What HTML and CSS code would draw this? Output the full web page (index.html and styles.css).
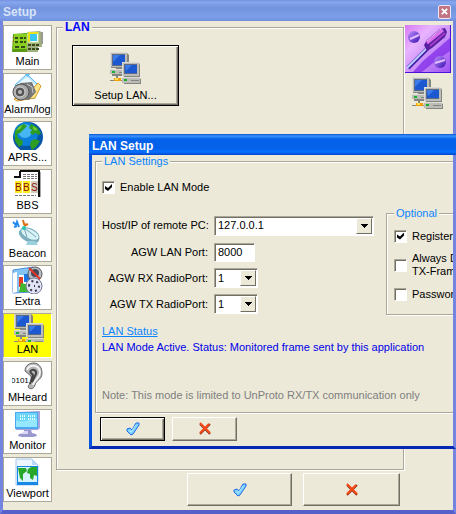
FILE: index.html
```html
<!DOCTYPE html>
<html lang="en">
<head>
<meta charset="utf-8">
<title>Setup</title>
<link rel="stylesheet" href="styles.css">
</head>
<body>
<svg class="defs" aria-hidden="true">
  <defs>
    <symbol id="net" viewBox="0 0 32 32">
      <path fill="#85857f" d="M3 1h14l2 2v13h-4v2h5v6H2V18h4v-2H1V3z"/>
      <path fill="#bdbdb8" d="M0 0h17v15H0zM0 17h18v5H0z"/>
      <path fill="#dcdcd8" d="M0 0h17v1H0zM0 0h1v15H0zM0 17h18v1H0z"/>
      <path fill="#5c6a88" d="M2 2h13v12H2z"/>
      <path fill="#1c58d0" d="M3 3h12v10H3z"/>
      <path fill="#3c7ce8" d="M3 3h7l-7 7z"/>
      <path fill="#18b030" d="M2 19h3v2H2z"/>
      <path fill="#85857f" d="M9 20h8v1H9zM6 23h2v3H6zM0 28h14v1H0z"/>
      <path fill="#f0a000" d="M4 26h7v3H4z"/><path fill="#ffdc50" d="M5 26h3v2H5z"/>
      <path fill="#85857f" d="M14 11h15l1 2v12h-3l4 2v5H14z"/>
      <path fill="#bdbdb8" d="M12 10h17v14H12zM12 26h18v5H12z"/>
      <path fill="#dcdcd8" d="M12 10h17v1H12zM12 10h1v14h-1zM14 25h14l2 1H12z"/>
      <path fill="#5c6a88" d="M14 12h13v10H14z"/>
      <path fill="#1c58d0" d="M15 13h12v8H15z"/>
      <path fill="#3c7ce8" d="M15 13h7l-6 6z"/>
      <path fill="#18b030" d="M14 27h3v2h-3z"/><path fill="#85857f" d="M21 28h8v1h-8z"/>
    </symbol>
    <symbol id="ok" viewBox="0 0 14 14">
      <path d="M1 7l3-1 2 2 4-7h3v2L7 12 5 13 1 9z" fill="#7fd4ff" stroke="#2068e8"/>
      <path d="M4 9l1 1 5-7" fill="none" stroke="#b4edff"/>
    </symbol>
    <symbol id="no" viewBox="0 0 14 14">
      <path d="M2 2l10 10M12 2L2 12" fill="none" stroke="#8c3a22" stroke-width="2"/>
      <path d="M2 1l10 10M11 2L2 11" fill="none" stroke="#f84818" stroke-width="2"/>
    </symbol>
    <symbol id="down" viewBox="0 0 7 4"><path d="M0 0h7v1H6v1H5v1H4v1H3V3H2V2H1V1H0z"/></symbol>
  </defs>
</svg>
<div class="window">
  <header class="titlebar">
    <h1>Setup</h1>
    <button class="close" type="button" aria-label="Close"><svg viewBox="0 0 10 10"><path d="M2 2l6 6M8 2L2 8" stroke="#fff" stroke-width="2"/></svg></button>
  </header>
  <div class="content">
    <nav class="tabs">
      <button type="button" class="tab"><svg viewBox="0 0 32 28">
        <path fill="#5a9a10" d="M1 8l14-1v19H0z"/><path fill="#8ad020" d="M2 8h14v15H1z"/><path fill="#a0b080" d="M15 6l13-1 2 2v14h-4v5H15z"/><path fill="#b9d98a" d="M15 6h12v11H15z"/>
        <path fill="#9a9a92" d="M29 6h2v12h-2z"/><path fill="#fff" d="M17 7h9v9h-9z"/><path fill="#e8e020" d="M16 6h10v2H18v8h-2z"/><path fill="#38c8f0" d="M18 8h7v7h-7z"/>
        <path fill="#354a18" d="M3 11h3v2H3zM8 11h3v2H8zM12 11h2v2h-2zM3 15h3v2H3zM8 15h3v2H8zM12 15h2v2h-2zM3 20h4v2H3zM9 20h4v2H9zM16 18h3v2h-3zM20 18h3v2h-3zM24 18h3v2h-3zM16 22h3v2h-3zM20 22h3v2h-3zM24 22h3v2h-3z"/><path fill="#e03020" d="M1 11h1v1H1zM1 15h1v1H1z"/>
      </svg><span>Main</span></button>
      <button type="button" class="tab"><svg viewBox="0 0 32 28">
        <path fill="#bde6fb" stroke="#58b6ea" d="M3 11L15 0l12 12-5 13-15-6z"/><path fill="#eaf9ff" d="M6 10l9-7 9 8-9 7z"/><path fill="#52bff5" d="M13 0h5l-2 3z"/>
        <path fill="#ffe58a" stroke="#d59a20" d="M2 25l14-5 10-11 3 3-6 12-18 3z"/><path fill="#777" d="M8 9l12-1 4 10-7 8-8-1z"/><circle cx="9" cy="18" r="8" fill="#a8a8a8" stroke="#555"/><circle cx="8" cy="18" r="5" fill="#555" stroke="#ddd"/><circle cx="8" cy="18" r="2" fill="#bbb"/><path fill="none" stroke="#ccc" d="M15 10l5 3 1 6"/>
      </svg><span>Alarm/log</span></button>
      <button type="button" class="tab"><svg viewBox="0 0 32 28">
        <circle cx="16" cy="15" r="15" fill="#0656a8"/><circle cx="14" cy="12" r="12" fill="#0c7fd8"/><circle cx="13" cy="9" r="7" fill="#45b5f4"/>
        <path fill="#2c9c22" d="M3 9l4-5 5-2 3 2-4 4-3 3-3 1 1 4 5 3-1 4-3 2-4-6zM19 2l6 3 4 6-2 2-4-2-2 2-3-2 2-3-3-2zM19 19l4-2 5 2-4 6-4 3-2-5z"/><path fill="#78d040" d="M7 5l4-2-3 4-4 2zM21 4l4 3-1 2-3-2z"/>
      </svg><span>APRS...</span></button>
      <button type="button" class="tab"><svg viewBox="0 0 32 28">
        <path d="M7 1h20v26H3V7h4z" fill="#fff"/><path d="M8 1v6H2M8 1h19v26" fill="none" stroke="#111" stroke-width="2"/><path fill="#aaa" d="M28 2h1v25h-1z"/><path stroke="#777" stroke-dasharray="3 1" d="M11 4.500h14M11 6.500h14M11 8.500h14M3 25.500h21"/>
        <path fill="#ffec20" d="M3 11h7v12H3zM11 11h7v12h-7z"/><path fill="#d4cdbb" d="M19 11h7v12h-7z"/><text x="3" y="21" class="bbs">B</text><text x="11" y="21" class="bbs">B</text><text x="19" y="21" class="bbs">S</text>
      </svg><span>BBS</span></button>
      <button type="button" class="tab"><svg viewBox="0 0 32 28">
        <path fill="none" stroke="#2088f0" stroke-width="2" d="M1 4l3 3 1-3 2 5M2 9l3-1"/><path fill="none" stroke="#e07018" stroke-width="2" d="M11 2l1 4 3 1M16 6l-4 2"/>
        <ellipse cx="17" cy="18" rx="11" ry="6" transform="rotate(27 17 18)" fill="#7fb0c0"/><ellipse cx="18" cy="16" rx="10" ry="5" transform="rotate(27 18 16)" fill="#d8f4f8" stroke="#79a9b8"/><path stroke="#78a4b0" fill="none" d="M12 10l7 5 5 4M12 10l3 9"/><circle cx="12" cy="10" r="2" fill="#20c8b8"/><path fill="#9ad0dc" d="M16 23h7l3 4H14z"/>
      </svg><span>Beacon</span></button>
      <button type="button" class="tab"><svg viewBox="0 0 32 28">
        <path fill="#84c4f4" stroke="#4b8fd8" d="M1 4l20-3v25L1 27z"/><path fill="#fff" d="M1 7l4-1v20l-4 1zM7 9h11v15H7z"/><path fill="#e83c20" d="M7 11h4v10H7z"/><path fill="#40b830" d="M9 17l9 2v7H7z"/><path fill="#1c78e0" d="M12 8h6v8h-6z"/>
        <circle cx="23" cy="8" r="7" fill="#b9bdc8" stroke="#555"/><circle cx="23" cy="7" r="4" fill="#454a58"/><path stroke="#e83228" stroke-width="2" d="M17 2l11 11"/><circle cx="22" cy="20" r="8" fill="#e1e4f5" stroke="#777b96"/><path stroke="#34384c" stroke-width="2" fill="none" stroke-dasharray="2 3" d="M17 20a5 5 0 0110 0 5 5 0 01-10 0M22 20h1"/>
      </svg><span>Extra</span></button>
      <button type="button" class="tab tab--active"><svg viewBox="0 0 32 28"><use href="#net" x="2" y="-1" width="32" height="32"/></svg><span>LAN</span></button>
      <button type="button" class="tab"><svg viewBox="0 0 32 28">
        <path fill="#b5b5b5" stroke="#666" d="M13 9c0-6 5-8 9-8s8 4 8 10c0 7-6 7-7 12-1 4-5 5-7 2 2-4 4-7 3-11z"/><path fill="none" stroke="#f1f1f1" stroke-width="2" d="M15 8c2-6 12-6 13 2 0 6-5 7-7 13"/><path fill="none" stroke="#444" stroke-width="2" d="M18 10c2-4 7-2 6 2l-4 8M18 10l3 3-3 9"/><path fill="#fff" d="M0 14h16v8H0z"/><text x="-1" y="21" class="bits">0101</text>
      </svg><span>MHeard</span></button>
      <button type="button" class="tab"><svg viewBox="0 0 32 28">
        <path fill="#a6a6dc" d="M4 2l24-1v17l-2 2H4z"/><path fill="#4ba7ee" d="M3 2h23v17H3z"/><path fill="#6bd5fb" d="M4 3h21v14H4z"/><path fill="#96e8ff" d="M4 10c8 4 14-2 21-1v8H4z"/><path stroke="#e5ffff" stroke-width="2" stroke-dasharray="1 1" d="M8 6h6M16 6h7M8 9h6M16 9h7"/><path fill="#9998ce" d="M12 20h7l1 3 4 1 1 2-4 1H10l-4-1 1-2 5-1z"/><path fill="#dad9f5" d="M12 21h4v3H9z"/>
      </svg><span>Monitor</span></button>
      <button type="button" class="tab"><svg viewBox="0 0 32 28">
        <path fill="#edf5ff" stroke="#a6c7ed" d="M4 1h16l6 6v20H4z"/><path fill="#b9d9f8" d="M20 1v6h6z"/><path fill="#1688e8" d="M5 8h21v19H5z"/><path fill="#d4f3ff" d="M6 9h19v15H6z"/><path fill="#28a828" d="M6 10h8l1 3-4 3v7l-3-3-1-5zM16 11l3-2h6v9l-3-1-1 5-3-2v-4l-3-1z"/>
      </svg><span>Viewport</span></button>
    </nav>
    <main class="page">
      <fieldset class="group">
        <legend>LAN</legend>
        <button type="button" class="setup"><svg><use href="#net"/></svg><span>Setup LAN...</span></button>
      </fieldset>
      <div class="footer">
        <button type="button" class="btn" aria-label="OK"><svg class="mark"><use href="#ok"/></svg></button>
        <button type="button" class="btn" aria-label="Cancel"><svg class="mark"><use href="#no"/></svg></button>
      </div>
    </main>
    <aside class="side">
      <svg class="tools" viewBox="0 0 46 48">
        <defs>
          <linearGradient id="lilac" x2="1" y2="1"><stop stop-color="#d878f4"/><stop offset=".3" stop-color="#e8b4ff"/><stop offset="1" stop-color="#9a50f0"/></linearGradient>
          <linearGradient id="ball" x2="1" y2="1"><stop stop-color="#c090ff"/><stop offset="1" stop-color="#3810b0"/></linearGradient>
        </defs>
        <path fill="url(#lilac)" d="M0 0h46v48H0z"/><path fill="#8432e8" d="M18 36l27-23v13L28 38l-11 9h-9z" opacity=".8"/><path fill="#4a12dc" d="M45 0h1v48H0v-1h45z"/>
        <circle cx="9" cy="12" r="6" fill="url(#ball)"/><path stroke="#e4baff" stroke-width="2" d="M5 14l9-4"/><circle cx="35" cy="37" r="6" fill="url(#ball)"/><path stroke="#e4baff" stroke-width="2" d="M30 38l10-3"/>
        <path stroke="#4422a8" stroke-width="4" d="M3 43l20-20"/><path stroke="#b8ccff" stroke-width="2" d="M2 43l20-20"/><path fill="#5820a0" d="M19 20l3-5L35 4l5-1 2 4-2 5-13 11-5 3z"/><path stroke="#dc70ec" stroke-width="3" d="M22 18L38 5"/><path stroke="#a23cc8" stroke-width="2" d="M25 21L40 8"/><path stroke="#f4baff" d="M22 16L36 4"/>
      </svg>
      <svg class="pcs"><use href="#net"/></svg>
    </aside>
  </div>
  <section class="dialog" role="dialog" aria-labelledby="dlg">
    <h2 id="dlg" class="dialog-title">LAN Setup</h2>
    <form class="dialog-body">
      <fieldset class="settings">
        <legend>LAN Settings</legend>
        <label class="check"><input type="checkbox" checked><span>Enable LAN Mode</span></label>
        <div class="columns">
          <div class="fields">
            <label for="host">Host/IP of remote PC:</label>
            <div class="combo combo--wide"><select id="host"><option>127.0.0.1</option></select><i><svg><use href="#down"/></svg></i></div>
            <label for="port">AGW LAN Port:</label>
            <input id="port" class="text" type="text" value="8000">
            <label for="rx">AGW RX RadioPort:</label>
            <div class="combo"><select id="rx"><option>1</option></select><i><svg><use href="#down"/></svg></i></div>
            <label for="tx">AGW TX RadioPort:</label>
            <div class="combo"><select id="tx"><option>1</option></select><i><svg><use href="#down"/></svg></i></div>
          </div>
          <fieldset class="optional">
            <legend>Optional</legend>
            <label class="check"><input type="checkbox" checked><span>Register</span></label>
            <label class="check"><input type="checkbox"><span>Always D<br>TX-Fram</span></label>
            <label class="check"><input type="checkbox"><span>Passwor</span></label>
          </fieldset>
        </div>
        <div class="status">
          <a href="#status">LAN Status</a>
          <p id="status">LAN Mode Active. Status: Monitored frame sent by this application</p>
        </div>
        <p class="note">Note: This mode is limited to UnProto RX/TX communication only</p>
      </fieldset>
      <div class="actions">
        <button type="button" class="btn btn--default" aria-label="OK"><svg class="mark"><use href="#ok"/></svg></button>
        <button type="button" class="btn" aria-label="Cancel"><svg class="mark"><use href="#no"/></svg></button>
      </div>
    </form>
  </section>
</div>
</body>
</html>
```
FILE: styles.css
```css
* { box-sizing: border-box; }
body {
  margin: 0;
  font: 11px/13px "Liberation Sans", Arial, sans-serif;
  color: #000;
  overflow-x: hidden;
}
button, input, select { font: inherit; color: inherit; margin: 0; padding: 0; border-radius: 0; }
h1, h2, p { margin: 0; }
fieldset { margin: 0; padding: 0; min-width: 0; }
svg { display: block; }
.defs { position: absolute; width: 0; height: 0; }

.window {
  position: relative;
  display: flex;
  flex-direction: column;
  min-height: 100vh;
  background: #ece9d8;
  border: solid #7385e0;
  border-width: 0 3px 4px;
  border-bottom-color: #5560c8;
}
.titlebar {
  display: flex;
  align-items: center;
  justify-content: space-between;
  height: 21px;
  margin: 0 -3px;
  padding: 2px 5px 0 3px;
  background: linear-gradient(#7390e0, #86a6ee 2px, #7393df 8px, #7d9fe9 17px, #728fdc);
}
.titlebar h1 { font-size: 12px; line-height: 18px; color: #d8e4f8; }
.close {
  display: grid;
  place-items: center;
  width: 13px;
  height: 14px;
  background: #c07484;
  border: 1px solid #efe5f5;
  border-radius: 2px;
}
.close svg { width: 9px; height: 9px; }

.content { flex: 1; display: flex; gap: 4px; }
.tabs { display: flex; flex-direction: column; gap: 3px; width: 49px; padding-top: 4px; }
.tab {
  display: flex;
  flex-direction: column;
  align-items: center;
  row-gap: 1px;
  height: 45px;
  background: #fff;
  border: 1px solid #aca899;
  white-space: nowrap;
}
.tab svg { width: 32px; height: 28px; flex: none; }
.tab--active { background: #ff0; border-color: #aca899 #fff #fff #aca899; }
.bbs { font: 10px "Liberation Sans", sans-serif; fill: #8b1010; }
.bits { font: 8px "Liberation Sans", sans-serif; fill: #000; }

.page { flex: 1; display: flex; flex-direction: column; gap: 3px; }
.group, .settings, .optional {
  border: 1px solid #aca899;
  box-shadow: 1px 1px 0 #fff, inset 1px 1px 0 #fff;
}
legend { background: #ece9d8; padding: 0 2px; color: #0a84ff; }
.group { flex: 1; padding: 11px 15px; }
.group > legend { margin-left: -9px; font-size: 12px; font-weight: bold; color: #00f; }
.btn, .setup {
  display: grid;
  place-items: center;
  background: #ece9d8;
  border: 1px solid;
  border-color: #fff #716f64 #716f64 #fff;
  box-shadow: inset -1px -1px 0 #aca899;
}
.setup, .btn--default { border-color: #000; box-shadow: inset 1px 1px 0 #fff, inset -1px -1px 0 #716f64, inset -2px -2px 0 #aca899; }
.setup { width: 107px; height: 61px; align-content: center; row-gap: 5px; padding-top: 2px; }
.setup svg, .pcs { width: 32px; height: 32px; }
.mark { width: 14px; height: 14px; }
.footer { display: grid; grid-template-columns: 105px 97px; gap: 11px; justify-content: end; padding: 0 4px 4px 0; }
.footer .btn { height: 33px; }

.side { display: flex; flex-direction: column; align-items: center; gap: 4px; width: 46px; margin: 4px 2px 0 -3px; }
.tools { width: 46px; height: 48px; }

.dialog { position: absolute; top: 134px; left: 86px; right: -3px; }
.dialog-title {
  height: 21px;
  padding: 3px;
  font-size: 12px;
  line-height: 18px;
  color: #fff;
  background: linear-gradient(#0a50d0, #3a94ff 2px, #0462ea 5px, #0460e8 14px, #0570ff 18px, #0444c8);
}
.dialog-body {
  background: #ece9d8;
  border: solid #0453e0;
  border-width: 0 3px 3px;
  border-right-color: #7385e0;
  border-bottom-color: #0428b4;
  overflow: hidden;
}
.settings { margin: 0 -2px 0 3px; padding: 13px 0 10px 6px; }
.check { display: flex; align-items: center; gap: 5px; white-space: nowrap; }
.check input, .text, .combo {
  appearance: none;
  background: #fff;
  border: 1px solid;
  border-color: #aca899 #fff #fff #aca899;
  box-shadow: inset 1px 1px 0 #716f64;
}
.check input { flex: none; display: grid; place-items: center; width: 13px; height: 13px; }
.check input:checked::before {
  content: "";
  width: 7px;
  height: 7px;
  background: #000;
  clip-path: polygon(0 2px, 3px 4px, 7px 0, 7px 3px, 3px 7px, 0 5px);
}
.columns { display: flex; justify-content: space-between; align-items: flex-start; padding-top: 13px; }
.fields {
  display: grid;
  grid-template-columns: 106px auto;
  grid-template-rows: 21px 20px 20px 20px;
  gap: 6px;
  align-items: center;
  padding-top: 8px;
}
.fields label { text-align: right; white-space: nowrap; }
.combo { display: flex; width: 44px; height: 20px; padding: 1px; }
.combo--wide { width: 160px; }
.combo select { flex: 1; min-width: 0; appearance: none; border: 0; padding-left: 2px; background: #fff; }
.combo i {
  display: grid;
  place-items: center;
  width: 16px;
  background: #ece9d8;
  border: 1px solid;
  border-color: #fff #716f64 #716f64 #fff;
  pointer-events: none;
}
.combo svg { width: 7px; height: 4px; }
.text { width: 41px; height: 19px; padding: 0 3px; }
.optional { display: grid; grid-template-rows: 16px 26px 16px; row-gap: 8px; width: 70px; margin-right: -2px; padding: 8px 0 12px 7px; }
.status { display: grid; gap: 3px; padding-top: 10px; color: #0000e8; white-space: nowrap; }
.status a { justify-self: start; color: #0a84ff; }
.note { padding-top: 35px; color: #808080; white-space: nowrap; }
.actions { display: flex; gap: 7px; padding: 4px 0 5px 8px; }
.actions .btn { width: 65px; height: 24px; }
```
